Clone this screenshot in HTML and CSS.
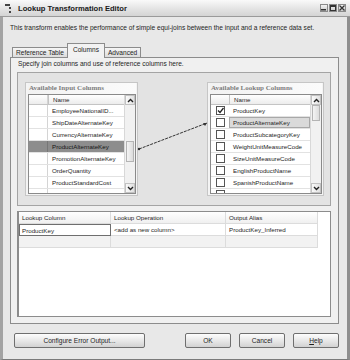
FILE: index.html
```html
<!DOCTYPE html>
<html lang="en">
<head>
    <meta charset="UTF-8">
    <title>Lookup Transformation Editor</title>
    <link rel="stylesheet" href="styles.css">
</head>
<body>

<div class="dialog">
    <!-- title bar -->
    <div class="titlebar">
        <span class="app-icon"><i></i><i></i><i></i></span>
        <span class="title">Lookup Transformation Editor</span>
        <div class="win-btns">
            <span class="wb"><svg width="6" height="6"><rect x="0" y="4" width="5" height="1.5" fill="#333"/></svg></span>
            <span class="wb"><svg width="6" height="6"><rect x="0.5" y="0.5" width="5" height="5" fill="none" stroke="#333"/><rect x="0.5" y="0.5" width="5" height="1.5" fill="#333"/></svg></span>
            <span class="wb"><svg width="6" height="6"><path d="M0.5 0.5 L5.5 5.5 M5.5 0.5 L0.5 5.5" stroke="#333" stroke-width="1.3"/></svg></span>
        </div>
    </div>

    <p class="desc">This transform enables the performance of simple equi-joins between the input and a reference data set.</p>

    <div class="tabs">
        <span class="tab">Reference Table</span>
        <span class="tab active">Columns</span>
        <span class="tab">Advanced</span>
    </div>

    <div class="panel">
        <p class="hint">Specify join columns and use of reference columns here.</p>

        <div class="mapping">
            <div class="colbox input-box">
                <div class="box-head">Available Input Columns</div>
                <div class="grid">
                    <div class="rows">
                        <div class="row head"><span class="sel"></span><span class="name">Name</span></div>
                        <div class="row"><span class="sel"></span><span class="name">EmployeeNationalID...</span></div>
                        <div class="row"><span class="sel"></span><span class="name">ShipDateAlternateKey</span></div>
                        <div class="row"><span class="sel"></span><span class="name">CurrencyAlternateKey</span></div>
                        <div class="row picked"><span class="sel"></span><span class="name">ProductAlternateKey</span></div>
                        <div class="row"><span class="sel"></span><span class="name">PromotionAlternateKey</span></div>
                        <div class="row"><span class="sel"></span><span class="name">OrderQuantity</span></div>
                        <div class="row"><span class="sel"></span><span class="name">ProductStandardCost</span></div>
                        <div class="row"><span class="sel"></span><span class="name">SalesAmount</span></div>
                    </div>
                    <div class="scroll">
                        <span class="arrow"><svg width="7" height="5"><path d="M1 4 L3.5 1.5 L6 4" fill="none" stroke="#222" stroke-width="1.4"/></svg></span>
                        <span class="track"><span class="thumb thumb-left"></span></span>
                        <span class="arrow"><svg width="7" height="5"><path d="M1 1 L3.5 3.5 L6 1" fill="none" stroke="#222" stroke-width="1.4"/></svg></span>
                    </div>
                </div>
            </div>

            <div class="colbox lookup-box">
                <div class="box-head">Available Lookup Columns</div>
                <div class="grid">
                    <div class="rows">
                        <div class="row head"><span class="chk-cell"></span><span class="name">Name</span></div>
                        <div class="row"><span class="chk-cell"><span class="chk on"><svg width="7" height="7"><path d="M1 3.5 L3 5.5 L6.5 1" fill="none" stroke="#222" stroke-width="1.3"/></svg></span></span><span class="name">ProductKey</span></div>
                        <div class="row hover"><span class="chk-cell"><span class="chk"></span></span><span class="name">ProductAlternateKey</span></div>
                        <div class="row"><span class="chk-cell"><span class="chk"></span></span><span class="name">ProductSubcategoryKey</span></div>
                        <div class="row"><span class="chk-cell"><span class="chk"></span></span><span class="name">WeightUnitMeasureCode</span></div>
                        <div class="row"><span class="chk-cell"><span class="chk"></span></span><span class="name">SizeUnitMeasureCode</span></div>
                        <div class="row"><span class="chk-cell"><span class="chk"></span></span><span class="name">EnglishProductName</span></div>
                        <div class="row"><span class="chk-cell"><span class="chk"></span></span><span class="name">SpanishProductName</span></div>
                        <div class="row"><span class="chk-cell"><span class="chk"></span></span><span class="name">FrenchProductName</span></div>
                    </div>
                    <div class="scroll">
                        <span class="arrow"><svg width="7" height="5"><path d="M1 4 L3.5 1.5 L6 4" fill="none" stroke="#222" stroke-width="1.4"/></svg></span>
                        <span class="track"><span class="thumb thumb-right"></span></span>
                        <span class="arrow"><svg width="7" height="5"><path d="M1 1 L3.5 3.5 L6 1" fill="none" stroke="#222" stroke-width="1.4"/></svg></span>
                    </div>
                </div>
            </div>

            <!-- join line between the two lists -->
            <svg class="link" width="314" height="134">
                <line x1="121" y1="76" x2="189" y2="50" stroke="#333" stroke-width="1" stroke-dasharray="3 1"/>
                <circle cx="121" cy="76" r="1.2" fill="#333"/>
                <path d="M189 50 L185 50 L187 53 Z" fill="#333"/>
            </svg>
        </div>

        <div class="outgrid">
            <div class="orow ohead">
                <span>Lookup Column</span>
                <span>Lookup Operation</span>
                <span>Output Alias</span>
            </div>
            <div class="orow">
                <span class="editing">ProductKey</span>
                <span>&lt;add as new column&gt;</span>
                <span>ProductKey_Inferred</span>
            </div>
            <div class="orow newrow">
                <span></span>
                <span></span>
                <span></span>
            </div>
        </div>
    </div>

    <div class="footer">
        <button class="btn wide">Configure Error Output...</button>
        <div class="btn-group">
            <button class="btn">OK</button>
            <button class="btn">Cancel</button>
            <button class="btn"><u>H</u>elp</button>
        </div>
    </div>
</div>

</body>
</html>
```

FILE: styles.css
```css
body {
    margin: 0;
    font-family: "Liberation Sans", Arial, sans-serif;
    font-size: 6.6px;
    color: #1e1e1e;
}

p {
    margin: 0;
}

.dialog {
    width: 350px;
    height: 360px;
    box-sizing: border-box;
    background-color: #e8e8e8;
    border-left: 3px solid #a3a3a3;
    border-right: 3px solid #8e8e8e;
    border-bottom: 1px solid #7a7a7a;
    display: flex;
    flex-direction: column;
}

/* title bar */
.titlebar {
    height: 17px;
    box-sizing: border-box;
    margin: 0 -3px;
    padding: 0 4px 0 5px;
    display: flex;
    align-items: center;
    background: linear-gradient(#fafafa, #e2e2e2 60%, #d4d4d4);
    border-bottom: 1px solid #9a9a9a;
}

.app-icon {
    width: 7px;
    height: 9px;
    display: flex;
    flex-direction: column;
    justify-content: space-between;
    margin-right: 6px;
}

.app-icon i {
    width: 2px;
    height: 2px;
    background: #444;
    margin-left: 4px;
}

.app-icon i:first-child {
    width: 5px;
    margin-left: 0;
}

.title {
    font-weight: bold;
    font-size: 7.6px;
    color: #1a1a1a;
    flex: 1;
}

.win-btns {
    display: flex;
    gap: 1px;
}

.wb {
    width: 8px;
    height: 8px;
    box-sizing: border-box;
    border: 1px solid #8a8a8a;
    background: linear-gradient(#f4f4f4, #c8c8c8);
    display: flex;
    align-items: center;
    justify-content: center;
}

.desc {
    padding: 6px 7px 0;
    line-height: 9px;
    height: 9px;
    white-space: nowrap;
}

/* tabs */
.tabs {
    margin: 11px 0 0 9px;
    height: 14px;
    display: flex;
    align-items: flex-end;
    position: relative;
    z-index: 1;
}

.tab {
    height: 9px;
    line-height: 9px;
    padding: 0 3px;
    border: 1px solid #8c8c8c;
    border-bottom: none;
    background: linear-gradient(#f6f6f6, #dcdcdc);
    margin-right: -1px;
}

.tab.active {
    height: 14px;
    line-height: 11px;
    padding: 0 5px;
    background: #f2f2f2;
    margin-bottom: -1px;
    height: 14px;
}

.panel {
    margin: 0 8px 0 7px;
    height: 267px;
    box-sizing: border-box;
    border: 1px solid #8c8c8c;
    background: #f0f0f0;
    padding: 1px 7px 6px 6px;
}

.hint {
    line-height: 9px;
    height: 9px;
    padding-left: 1px;
}

/* mapping area with the two lists */
.mapping {
    margin-top: 4px;
    height: 134px;
    box-sizing: border-box;
    border: 1px solid #a4a4a4;
    background: #e3e3e3;
    padding: 9px 6px 0 7px;
    display: flex;
    justify-content: space-between;
    align-items: flex-start;
    position: relative;
}

.colbox {
    height: 114px;
    box-sizing: border-box;
    border: 1px solid #c6c6c6;
    background: #f4f4f4;
    padding: 0 1px 1px 2px;
    display: flex;
    flex-direction: column;
}

.input-box {
    width: 113px;
}

.lookup-box {
    width: 117px;
}

.box-head {
    height: 11px;
    line-height: 11px;
    font-family: "Liberation Serif", serif;
    font-weight: bold;
    font-size: 7px;
    color: #7c7c7c;
    padding-left: 1px;
    background: linear-gradient(90deg, #f2f2f2, #fbfbfb);
}

.grid {
    height: 100px;
    box-sizing: border-box;
    border: 1px solid #8a8a8a;
    background: #fff;
    display: flex;
    overflow: hidden;
    font-size: 6.2px;
}

.rows {
    flex: 1;
    overflow: hidden;
}

.row {
    height: 12px;
    display: flex;
    border-bottom: 1px solid #e2e2e2;
    box-sizing: border-box;
}

.row.head {
    height: 10px;
    background: linear-gradient(#ffffff, #ececec);
    border-bottom: 1px solid #c4c4c4;
}

.row span {
    display: flex;
    align-items: center;
}

.sel {
    width: 18px;
    border-right: 1px solid #d4d4d4;
}

.name {
    flex: 1;
    padding-left: 4px;
    white-space: nowrap;
    overflow: hidden;
}

.row.head .name {
    border-left: 1px solid #c4c4c4;
}

.row.picked {
    background: #8d8d8d;
    color: #151515;
}

.row.picked .sel {
    border-right-color: #777;
}

.chk-cell {
    width: 18px;
    justify-content: center;
}

.chk {
    width: 9px;
    height: 9px;
    box-sizing: border-box;
    border: 1px solid #555;
    background: #fff;
    justify-content: center;
}

.row.hover .name {
    background: #dadada;
    outline: 1px solid #a8a8a8;
    outline-offset: -1px;
}

.scroll {
    width: 10px;
    border-left: 1px solid #d8d8d8;
    background: #f1f1f1;
    display: flex;
    flex-direction: column;
}

.arrow {
    height: 10px;
    display: flex;
    align-items: center;
    justify-content: center;
    background: linear-gradient(90deg, #fafafa, #e0e0e0);
    border: 1px solid #c2c2c2;
    box-sizing: border-box;
}

.track {
    flex: 1;
    position: relative;
}

.thumb {
    position: absolute;
    left: 1px;
    right: 1px;
    border: 1px solid #b4b4b4;
    background: linear-gradient(90deg, #f4f4f4, #dcdcdc);
}

.thumb-left {
    top: 36px;
    height: 19px;
}

.thumb-right {
    top: 0;
    height: 14px;
}

.link {
    position: absolute;
    left: 0;
    top: 0;
    pointer-events: none;
}

/* output columns grid */
.outgrid {
    margin-top: 5px;
    height: 106px;
    box-sizing: border-box;
    border: 1px solid #8c8c8c;
    border-left-width: 2px;
    background: #fff;
    font-size: 6.2px;
}

.orow {
    display: grid;
    grid-template-columns: 92px 115px 92px;
    height: 12px;
}

.orow span {
    display: flex;
    align-items: center;
    padding-left: 3px;
    border-right: 1px solid #dcdcdc;
    border-bottom: 1px solid #dcdcdc;
    white-space: nowrap;
    overflow: hidden;
}

.ohead span {
    background: linear-gradient(#ffffff, #f0f0f0);
}

.orow span.editing {
    border: 1px solid #6e6e6e;
    padding-left: 2px;
}

.newrow span {
    background: #f2f2f2;
}

/* bottom buttons */
.footer {
    flex: 1;
    display: flex;
    align-items: flex-start;
    justify-content: space-between;
    padding: 9px 8px 0 11px;
}

.btn-group {
    display: flex;
    gap: 8px;
}

.btn {
    height: 15px;
    width: 46px;
    padding: 0;
    font-family: "Liberation Sans", Arial, sans-serif;
    font-size: 6.6px;
    color: #1e1e1e;
    border: 1px solid #6f6f6f;
    border-radius: 2px;
    background: linear-gradient(#fdfdfd, #e6e6e6 55%, #d2d2d2);
}

.btn.wide {
    width: 131px;
}
```
